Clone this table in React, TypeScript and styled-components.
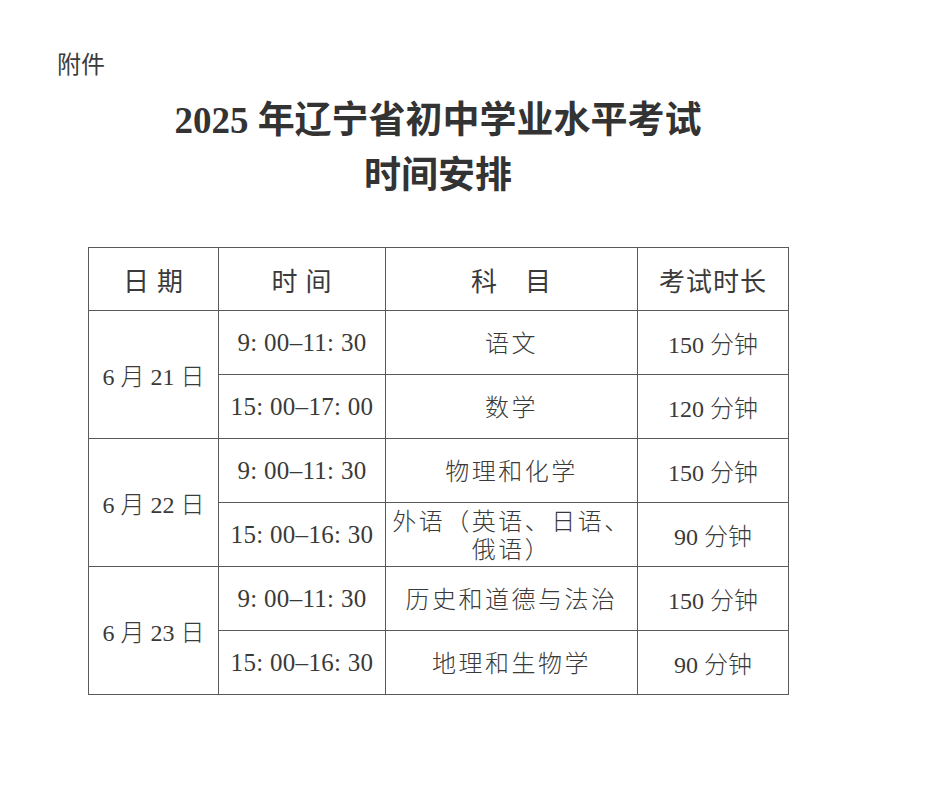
import React from "react";
import styled, { createGlobalStyle } from "styled-components";

const Global = createGlobalStyle`
  html, body { margin: 0; padding: 0; background: #ffffff; }
  body { width: 930px; height: 800px; overflow: hidden; }
`;

const Page = styled.div`
  width: 930px;
  height: 800px;
  box-sizing: border-box;
  padding: 50px 0 0 57px;
  color: #3a3a3a;
  font-family: "Liberation Serif", "Noto Sans CJK SC", serif;
`;

const Attachment = styled.div`
  font-family: "Noto Sans CJK SC", sans-serif;
  font-size: 24px;
  line-height: 26px;
  color: #3c3c3c;
`;

const Block = styled.div`
  width: 700px;
  margin-left: 31px;
`;

const Title = styled.h1`
  margin: 17px 0 0 0;
  text-align: center;
  font-family: "Liberation Serif", "Noto Sans CJK SC", serif;
  font-weight: 700;
  font-size: 37px;
  line-height: 55px;
  color: #333;
`;

const Table = styled.table`
  margin-top: 44px;
  border-collapse: collapse;
  table-layout: fixed;
  width: 700px;
`;

const Col = styled.col<{ $w: number }>`
  width: ${(p) => p.$w}px;
`;

const HeadCell = styled.th`
  border: 1.5px solid #5a5a5a;
  height: 62px;
  padding: 0;
  text-align: center;
  vertical-align: middle;
  font-family: "Noto Sans CJK SC", sans-serif;
  font-weight: 400;
  font-size: 26px;
  letter-spacing: 1px;
  color: #3a3a3a;
`;

const Cell = styled.td<{ $time?: boolean }>`
  border: 1.5px solid #5a5a5a;
  height: 63px;
  padding: 0;
  text-align: center;
  vertical-align: middle;
  font-family: "Liberation Serif", "Noto Sans CJK SC", serif;
  font-weight: 400;
  font-size: ${(p) => (p.$time ? "25px" : "24px")};
  letter-spacing: ${(p) => (p.$time ? "0.3px" : "0")};
  color: #3a3a3a;
`;

const Subject = styled.span<{ $multi?: boolean }>`
  display: inline-block;
  font-family: "Noto Sans CJK SC", sans-serif;
  font-weight: 300;
  letter-spacing: 2.5px;
  line-height: ${(p) => (p.$multi ? "28px" : "30px")};
`;

const Han = styled.span`
  font-family: "Noto Sans CJK SC", sans-serif;
  font-weight: 300;
`;

type Row = { date?: string; time: string; subject: React.ReactNode; multi?: boolean; mins: string };

const rows: Row[] = [
  { date: "21", time: "9: 00–11: 30", subject: "语文", mins: "150" },
  { time: "15: 00–17: 00", subject: "数学", mins: "120" },
  { date: "22", time: "9: 00–11: 30", subject: "物理和化学", mins: "150" },
  {
    time: "15: 00–16: 30",
    subject: (
      <>
        外语（英语、日语、
        <br />
        俄语）
      </>
    ),
    multi: true,
    mins: "90",
  },
  { date: "23", time: "9: 00–11: 30", subject: "历史和道德与法治", mins: "150" },
  { time: "15: 00–16: 30", subject: "地理和生物学", mins: "90" },
];

export default function App() {
  return (
    <>
      <Global />
      <Page>
        <Attachment>附件</Attachment>
        <Block>
          <Title>
            2025 年辽宁省初中学业水平考试
            <br />
            时间安排
          </Title>
          <Table>
            <colgroup>
              <Col $w={130} />
              <Col $w={167} />
              <Col $w={252} />
              <Col $w={151} />
            </colgroup>
            <thead>
              <tr>
                <HeadCell>日 期</HeadCell>
                <HeadCell>时 间</HeadCell>
                <HeadCell>科{"\u3000"}目</HeadCell>
                <HeadCell>考试时长</HeadCell>
              </tr>
            </thead>
            <tbody>
              {rows.map((r, i) => (
                <tr key={i}>
                  {r.date && (
                    <Cell rowSpan={2}>
                      6 <Han>月</Han> {r.date} <Han>日</Han>
                    </Cell>
                  )}
                  <Cell $time>{r.time}</Cell>
                  <Cell>
                    <Subject $multi={r.multi}>{r.subject}</Subject>
                  </Cell>
                  <Cell>
                    {r.mins} <Han>分钟</Han>
                  </Cell>
                </tr>
              ))}
            </tbody>
          </Table>
        </Block>
      </Page>
    </>
  );
}
